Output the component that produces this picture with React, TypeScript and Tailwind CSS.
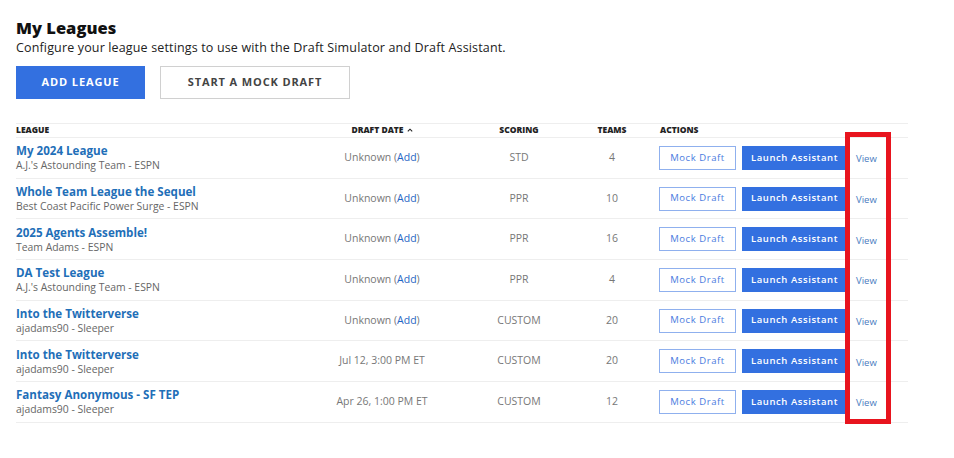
import React from "react";

type League = {
  name: string;
  team: string;
  date: string | null;
  scoring: string;
  teams: number;
};

const leagues: League[] = [
  { name: "My 2024 League", team: "A.J.'s Astounding Team - ESPN", date: null, scoring: "STD", teams: 4 },
  { name: "Whole Team League the Sequel", team: "Best Coast Pacific Power Surge - ESPN", date: null, scoring: "PPR", teams: 10 },
  { name: "2025 Agents Assemble!", team: "Team Adams - ESPN", date: null, scoring: "PPR", teams: 16 },
  { name: "DA Test League", team: "A.J.'s Astounding Team - ESPN", date: null, scoring: "PPR", teams: 4 },
  { name: "Into the Twitterverse", team: "ajadams90 - Sleeper", date: null, scoring: "CUSTOM", teams: 20 },
  { name: "Into the Twitterverse", team: "ajadams90 - Sleeper", date: "Jul 12, 3:00 PM ET", scoring: "CUSTOM", teams: 20 },
  { name: "Fantasy Anonymous - SF TEP", team: "ajadams90 - Sleeper", date: "Apr 26, 1:00 PM ET", scoring: "CUSTOM", teams: 12 },
];

const cols = "grid grid-cols-[304px_124px_150px_36px_1fr]";

export default function App() {
  return (
    <div
      className="relative w-[954px] h-[458px] bg-white text-[#222]"
      style={{ fontFamily: '"Open Sans", "Liberation Sans", sans-serif' }}
    >
      <div className="px-4 pt-[17px]">
        <h1 className="text-[16.5px] font-extrabold leading-[22px] text-[#111]">My Leagues</h1>
        <p className="text-[12.5px] leading-[18px] tracking-[0.012em] text-[#222]">
          Configure your league settings to use with the Draft Simulator and Draft Assistant.
        </p>
        <div className="mt-[9px] flex gap-[15px]">
          <button className="h-[33px] w-[129px] bg-[#3370e0] text-[11px] font-bold tracking-[0.08em] text-white">
            ADD LEAGUE
          </button>
          <button className="h-[33px] w-[190px] border border-[#d0d0d0] bg-white text-[11px] font-bold tracking-[0.08em] text-[#444]">
            START A MOCK DRAFT
          </button>
        </div>

        <div className="mt-[24px] w-[892px]">
          <div className={`${cols} h-[15px] items-center border-y border-[#eeeeee] text-[8.5px] font-extrabold text-[#222]`}>
            <div>LEAGUE</div>
            <div className="flex items-center justify-center gap-[3px]">
              DRAFT DATE
              <svg width="6" height="4" viewBox="0 0 6 4" className="mt-[-1px]">
                <path d="M0.8 3.4 L3 1.2 L5.2 3.4" fill="none" stroke="#222" strokeWidth="1.1" />
              </svg>
            </div>
            <div className="text-center">SCORING</div>
            <div className="text-center">TEAMS</div>
            <div className="pl-[30px]">ACTIONS</div>
          </div>

          {leagues.map((l, i) => (
            <div
              key={i}
              className={`${cols} h-[40.7px] items-center border-b border-[#eeeeee]`}
            >
              <div className="flex flex-col">
                <span className="text-[11.6px] font-bold leading-[15px] text-[#1f6fb8]">{l.name}</span>
                <span className="text-[10.4px] leading-[14px] text-[#666]">{l.team}</span>
              </div>
              <div className="text-center text-[10.5px] text-[#777]">
                {l.date ?? (
                  <>
                    Unknown (<span className="text-[#1f66c4]">Add</span>)
                  </>
                )}
              </div>
              <div className="text-center text-[10.5px] text-[#777]">{l.scoring}</div>
              <div className="text-center text-[10.5px] text-[#777]">{l.teams}</div>
              <div className="flex items-center pl-[29px]">
                <button className="h-[24px] w-[77px] border border-[#8fb0ee] bg-white text-[9.5px] tracking-[0.06em] text-[#4a7be0]">
                  Mock Draft
                </button>
                <button className="ml-[6px] h-[24px] w-[105px] bg-[#3370e0] text-[9.5px] font-semibold tracking-[0.06em] text-white">
                  Launch Assistant
                </button>
                <span className="ml-[9px] mt-[3px] text-[9.5px] text-[#4a7bc0]">View</span>
              </div>
            </div>
          ))}
        </div>
      </div>

      {/* highlight frame around the View links */}
      <div className="pointer-events-none absolute left-[845px] top-[132px] h-[292px] w-[46px] border-[5px] border-[#e8141e]" />
    </div>
  );
}
